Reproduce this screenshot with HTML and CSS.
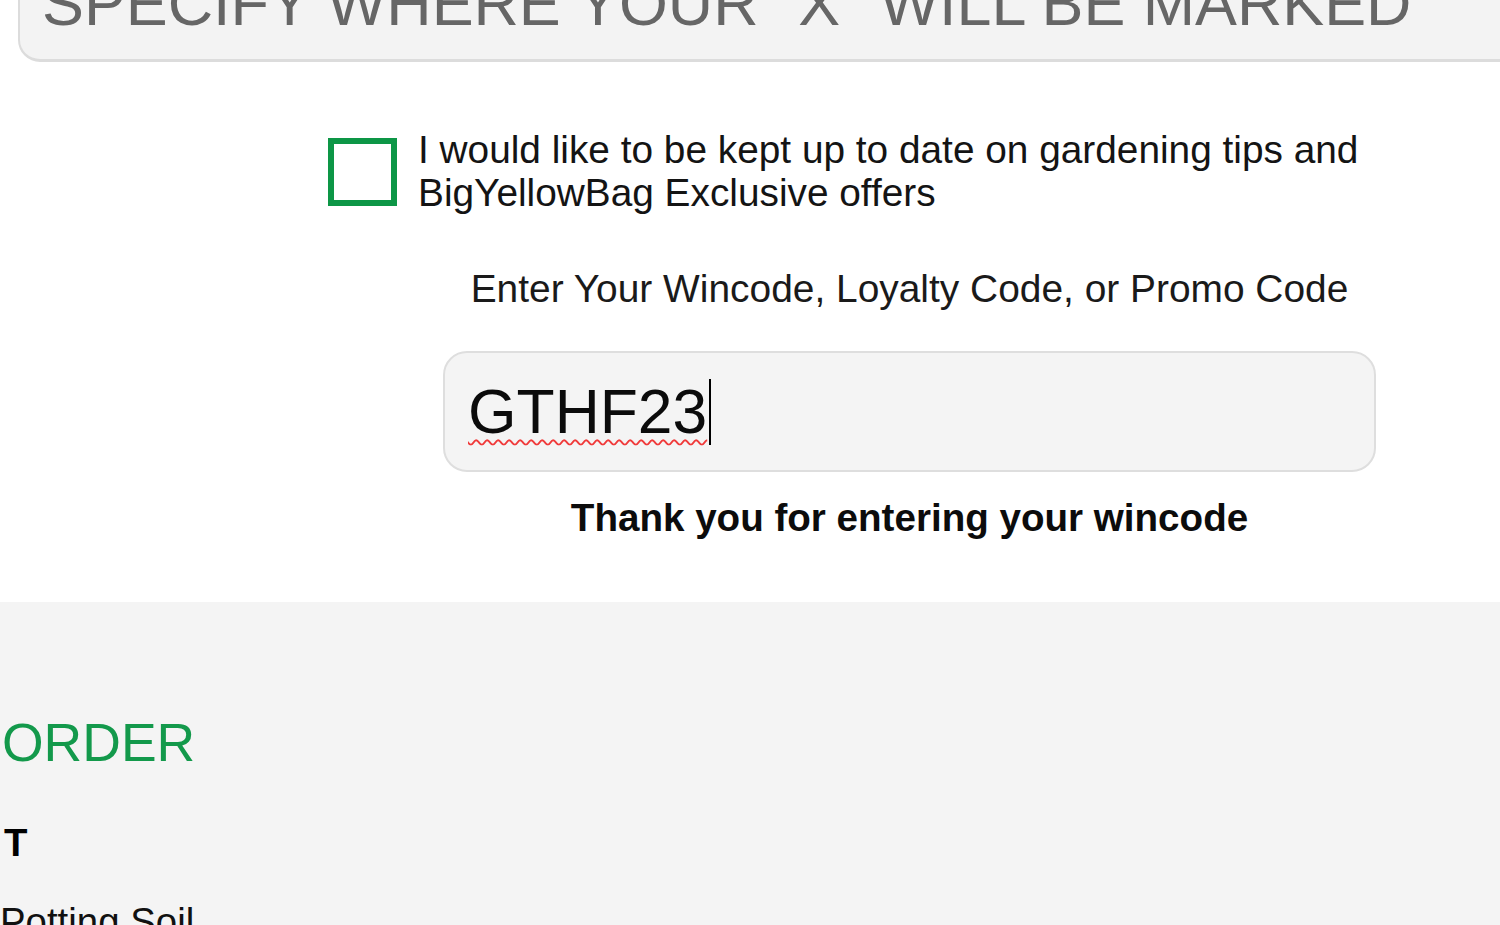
FILE: index.html
```html
<!DOCTYPE html>
<html lang="en">
<head>
<meta charset="utf-8">
<title>Wincode</title>
<link rel="stylesheet" href="styles.css">
</head>
<body>
<div class="page">
  <div class="mark-panel">
    <h2 class="mark-title">SPECIFY WHERE YOUR "X" WILL BE MARKED</h2>
  </div>

  <section class="form-area">
    <div class="form">
      <label class="optin">
        <span class="checkbox"></span>
        <span class="optin-text">I would like to be kept up to date on gardening tips and BigYellowBag Exclusive offers</span>
      </label>

      <p class="code-label">Enter Your Wincode, Loyalty Code, or Promo Code</p>

      <div class="code-input">
        <span class="code-value">GTHF23</span><span class="caret"></span>
      </div>

      <p class="code-thanks">Thank you for entering your wincode</p>
    </div>
  </section>

  <section class="order">
    <h3 class="order-title">ORDER</h3>
    <div class="order-head">T</div>
    <div class="order-item">Potting Soil</div>
  </section>
</div>
</body>
</html>
```

FILE: styles.css
```css
html, body {
  margin: 0;
  padding: 0;
  overflow: hidden;
  background: #ffffff;
}

body {
  font-family: "Liberation Sans", Arial, sans-serif;
  color: #111;
}

.page {
  width: 1500px;
  height: 925px;
  overflow: hidden;
}

.mark-panel {
  margin: -35px -40px 0 18px;
  padding: 0 0 20px 22px;
  background: #f3f3f3;
  border: 2px solid #dcdcdc;
  border-bottom-width: 3px;
  border-radius: 0 0 0 22px;
}

.mark-title {
  margin: 0;
  font-size: 62.8px;
  line-height: 72px;
  font-weight: normal;
  color: #666;
  white-space: nowrap;
}

.form-area {
  padding: 66px 0 63px 0;
}

.form {
  margin-left: 328px;
  width: 1163px;
  display: flex;
  flex-direction: column;
  align-items: center;
}

.optin {
  align-self: stretch;
  display: flex;
  align-items: flex-start;
  gap: 21px;
}

.checkbox {
  flex: none;
  width: 57px;
  height: 56px;
  margin-top: 10px;
  border: 6px solid #0d9646;
}

.optin-text {
  font-size: 38.8px;
  line-height: 43px;
  color: #141414;
}

.code-label {
  margin: 53px 0 0 0;
  font-size: 38.9px;
  line-height: 43px;
  color: #1a1a1a;
}

.code-input {
  margin-top: 41px;
  box-sizing: border-box;
  width: 933px;
  height: 121px;
  padding: 0 23px;
  display: flex;
  align-items: center;
  background: #f4f4f4;
  border: 2px solid #dedede;
  border-radius: 24px;
}

.code-value {
  font-size: 62.4px;
  line-height: 72px;
  color: #0b0b0b;
  text-decoration: underline wavy #f03a3a;
  text-decoration-thickness: 2px;
  text-underline-offset: 6px;
}

.caret {
  display: inline-block;
  width: 2px;
  height: 66px;
  margin-left: 2px;
  background: #000;
}

.code-thanks {
  margin: 24px 0 0 0;
  font-size: 38.6px;
  line-height: 43px;
  font-weight: bold;
  color: #0c0c0c;
}

.order {
  background: #f4f4f4;
  padding: 111px 0 40px 2px;
  min-height: 400px;
}

.order-title {
  margin: 0;
  font-size: 53.5px;
  line-height: 60px;
  font-weight: normal;
  color: #13994b;
}

.order-head {
  margin-top: 48px;
  font-size: 38.4px;
  line-height: 43px;
  font-weight: bold;
  color: #000;
  padding-left: 2px;
}

.order-item {
  margin-top: 36px;
  margin-left: -2px;
  font-size: 38.4px;
  line-height: 43px;
  color: #111;
}
```
